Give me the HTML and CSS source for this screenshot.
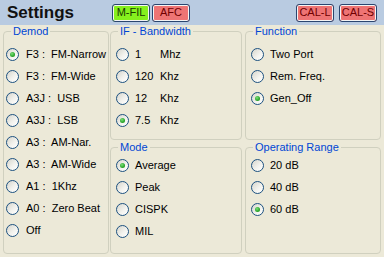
FILE: index.html
```html
<!DOCTYPE html>
<html>
<head>
<meta charset="utf-8">
<link rel="stylesheet" href="styles.css">
</head>
<body>
<div class="app">
  <header class="bar">
    <h1 class="title">Settings</h1>
    <div class="btns">
      <span class="btn green">M-FIL</span>
      <span class="btn red">AFC</span>
    </div>
    <div class="btns right">
      <span class="btn red">CAL-L</span>
      <span class="btn red">CAL-S</span>
    </div>
  </header>
  <main class="grid">
    <fieldset class="box demod">
      <legend>Demod</legend>
      <ul class="opts">
        <li class="opt"><span class="radio on"></span><span class="lbl">F3 :  FM-Narrow</span></li>
        <li class="opt"><span class="radio"></span><span class="lbl">F3 :  FM-Wide</span></li>
        <li class="opt"><span class="radio"></span><span class="lbl">A3J :  USB</span></li>
        <li class="opt"><span class="radio"></span><span class="lbl">A3J :  LSB</span></li>
        <li class="opt"><span class="radio"></span><span class="lbl">A3 :  AM-Nar.</span></li>
        <li class="opt"><span class="radio"></span><span class="lbl">A3 :  AM-Wide</span></li>
        <li class="opt"><span class="radio"></span><span class="lbl">A1 :  1Khz</span></li>
        <li class="opt"><span class="radio"></span><span class="lbl">A0 :  Zero Beat</span></li>
        <li class="opt"><span class="radio"></span><span class="lbl">Off</span></li>
      </ul>
    </fieldset>
    <fieldset class="box ifbw">
      <legend>IF - Bandwidth</legend>
      <ul class="opts">
        <li class="opt"><span class="radio"></span><span class="lbl"><span class="num">1</span>Mhz</span></li>
        <li class="opt"><span class="radio"></span><span class="lbl"><span class="num">120</span>Khz</span></li>
        <li class="opt"><span class="radio"></span><span class="lbl"><span class="num">12</span>Khz</span></li>
        <li class="opt"><span class="radio on"></span><span class="lbl"><span class="num">7.5</span>Khz</span></li>
      </ul>
    </fieldset>
    <fieldset class="box func">
      <legend>Function</legend>
      <ul class="opts">
        <li class="opt"><span class="radio"></span><span class="lbl">Two Port</span></li>
        <li class="opt"><span class="radio"></span><span class="lbl">Rem. Freq.</span></li>
        <li class="opt"><span class="radio on"></span><span class="lbl">Gen_Off</span></li>
      </ul>
    </fieldset>
    <fieldset class="box mode">
      <legend>Mode</legend>
      <ul class="opts low">
        <li class="opt"><span class="radio on"></span><span class="lbl">Average</span></li>
        <li class="opt"><span class="radio"></span><span class="lbl">Peak</span></li>
        <li class="opt"><span class="radio"></span><span class="lbl">CISPK</span></li>
        <li class="opt"><span class="radio"></span><span class="lbl">MIL</span></li>
      </ul>
    </fieldset>
    <fieldset class="box range">
      <legend>Operating Range</legend>
      <ul class="opts low">
        <li class="opt"><span class="radio"></span><span class="lbl">20 dB</span></li>
        <li class="opt"><span class="radio"></span><span class="lbl">40 dB</span></li>
        <li class="opt"><span class="radio on"></span><span class="lbl">60 dB</span></li>
      </ul>
    </fieldset>
  </main>
</div>
</body>
</html>
```
FILE: styles.css
```css
html, body {
  margin: 0;
  padding: 0;
}
body {
  width: 384px;
  height: 257px;
  overflow: hidden;
  background: #ece9d8;
  font-family: "Liberation Sans", Arial, sans-serif;
  font-size: 11px;
  color: #000;
}
.bar {
  height: 25px;
  background: #b9cbe1;
  display: flex;
  align-items: center;
}
.title {
  margin: 0 0 0 7px;
  width: 105px;
  font-size: 17px;
  font-weight: bold;
  color: #111;
  line-height: 20px;
}
.btns {
  display: flex;
  gap: 2px;
}
.btns.right {
  margin-left: auto;
  margin-right: 7px;
  gap: 5px;
}
.btn {
  box-sizing: border-box;
  height: 18px;
  width: 38px;
  border: 1px solid #2a4670;
  border-radius: 3px;
  box-shadow: inset 0 0 0 1px #f4f4f4;
  display: flex;
  align-items: center;
  justify-content: center;
  font-size: 11px;
  line-height: 1;
}
.green {
  background: #86f01e;
  color: #183800;
}
.red {
  background: #ee7474;
  color: #700000;
}
.grid {
  display: grid;
  grid-template-columns: 106px 1px 132px 3px 136px;
  grid-template-rows: 115px 113px;
  row-gap: 1px;
  padding-left: 3px;
}
.box {
  margin: 0;
  padding: 0;
  border: 1px solid #d0d0bf;
  border-radius: 4px;
  min-width: 0;
  box-sizing: border-box;
}
.box legend {
  color: #0046d5;
  padding: 0 2px;
  margin-left: 7px;
  line-height: 13px;
  font-size: 11px;
}
.demod { grid-column: 1; grid-row: 1 / 3; }
.ifbw { grid-column: 3; grid-row: 1; }
.func { grid-column: 5; grid-row: 1; }
.mode { grid-column: 3; grid-row: 2; }
.range { grid-column: 5; grid-row: 2; }
.opts {
  list-style: none;
  margin: 0;
  padding: 5px 0 0 5px;
}
.demod .opts {
  padding-left: 2px;
}
.opts.low {
  padding-top: 0;
}
.opt {
  height: 22px;
  display: flex;
  align-items: center;
}
.radio {
  position: relative;
  box-sizing: border-box;
  width: 13px;
  height: 13px;
  flex: none;
  border: 1px solid #1c5180;
  border-radius: 50%;
  background: linear-gradient(135deg, #d6d5cc 0%, #f4f4f0 60%, #ffffff 100%);
}
.radio.on::after {
  content: "";
  position: absolute;
  left: 3px;
  top: 3px;
  width: 5px;
  height: 5px;
  border-radius: 50%;
  background: radial-gradient(circle at 40% 35%, #7be07b 0%, #2aa52a 60%, #1c8a1c 100%);
}
.lbl {
  margin-left: 6px;
  white-space: pre;
}
.demod .lbl {
  margin-left: 7px;
}
.num {
  display: inline-block;
  width: 25px;
}
```
